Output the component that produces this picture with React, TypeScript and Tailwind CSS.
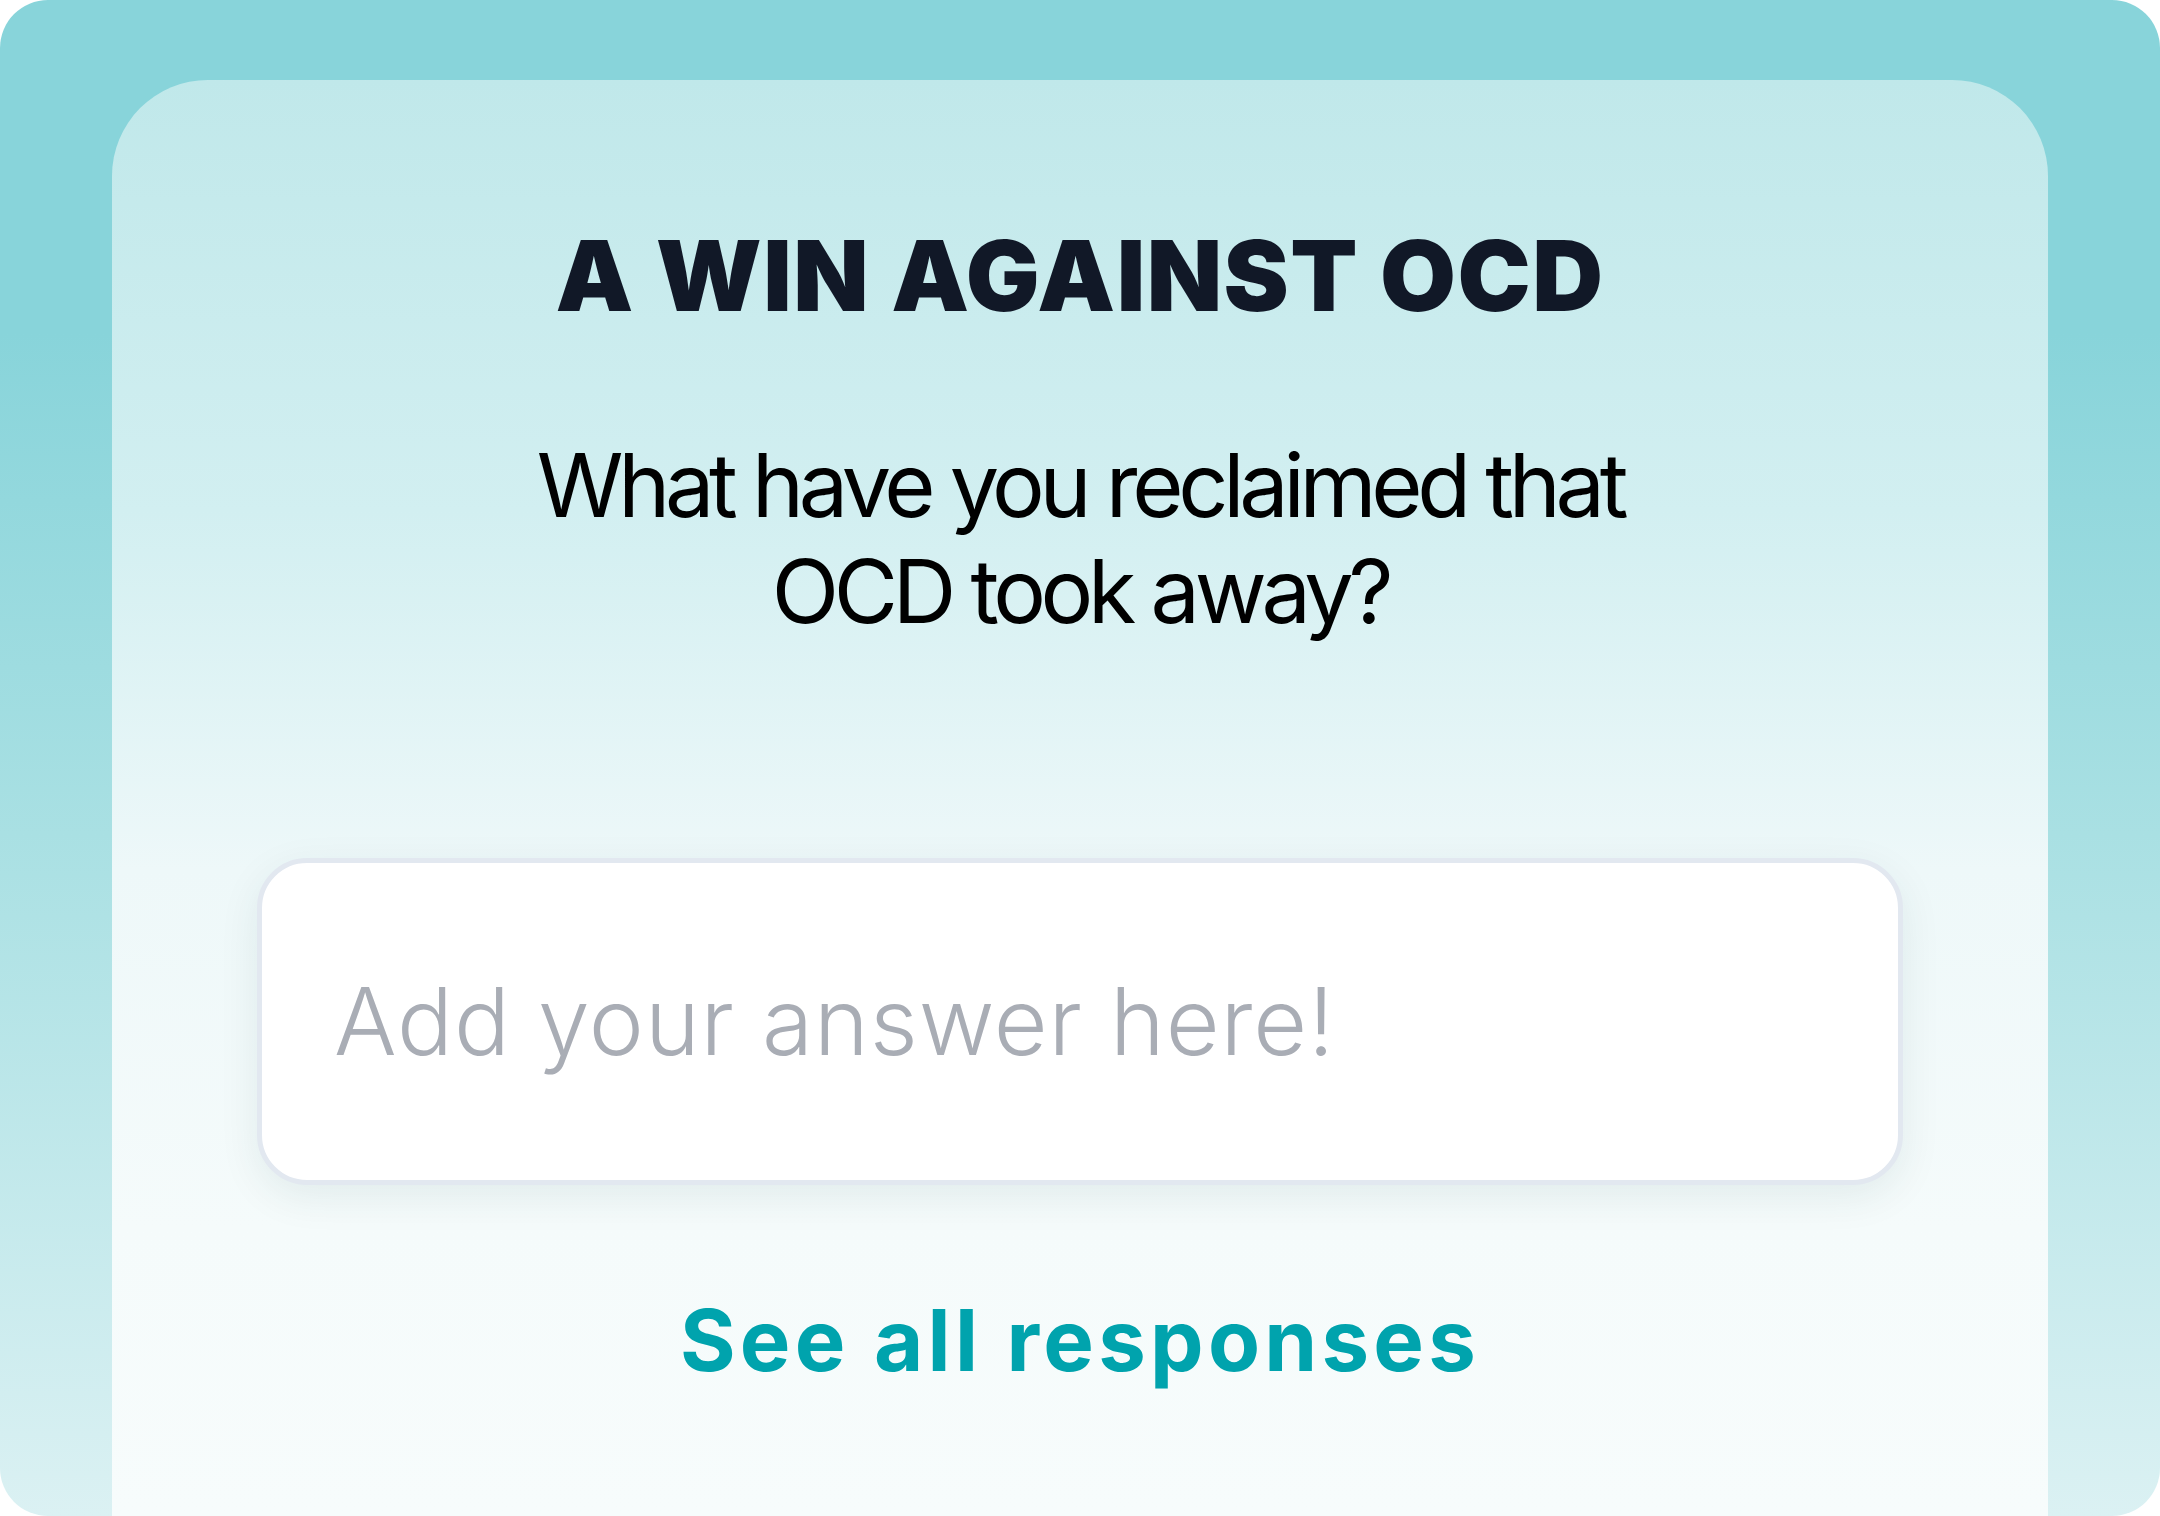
export default function App() {
  return (
    <div className="w-[2160px] h-[1516px] flex flex-col overflow-hidden rounded-[48px] px-[112px] pt-[80px] bg-[linear-gradient(180deg,#88d4da_0%,#88d4da_22%,#a9e0e3_55%,#dbf1f3_100%)]">
      <div className="flex-1 flex flex-col items-center rounded-t-[96px] pt-[147px] bg-[linear-gradient(180deg,#c0e8ea_0%,#d2eff1_30%,#eef8f9_55%,#f5fbfb_80%,#f7fcfc_100%)]">
        {/* Heading */}
        <h1 className="font-['Inter',sans-serif] text-[98px] leading-none font-black tracking-[0.015em] text-[#111827]">
          A WIN AGAINST OCD
        </h1>

        <p className="mt-[107px] text-center font-['Inter',sans-serif] text-[88px] leading-[106px] font-normal text-black tracking-[-0.06em]">
          What have you reclaimed that
          <br />
          OCD took away?
        </p>

        {/* Answer box */}
        <div className="mt-[214px] w-[1646px] h-[327px] flex items-center rounded-[50px] border-[5px] border-[#e2e8f0] bg-white shadow-[0_12px_40px_rgba(15,60,70,0.08)]">
          <input
            type="text"
            placeholder="Add your answer here!"
            className="w-full bg-transparent pl-[72px] pr-[72px] outline-none font-['Inter',sans-serif] text-[93px] font-light tracking-[0.01em] text-[#374151] placeholder:text-[#a9adb5]"
          />
        </div>

        <button className="mt-[113px] font-['Inter',sans-serif] text-[85px] leading-none font-bold tracking-[0.05em] text-[#00a3ad]">
          See all responses
        </button>
      </div>
    </div>
  )
}
